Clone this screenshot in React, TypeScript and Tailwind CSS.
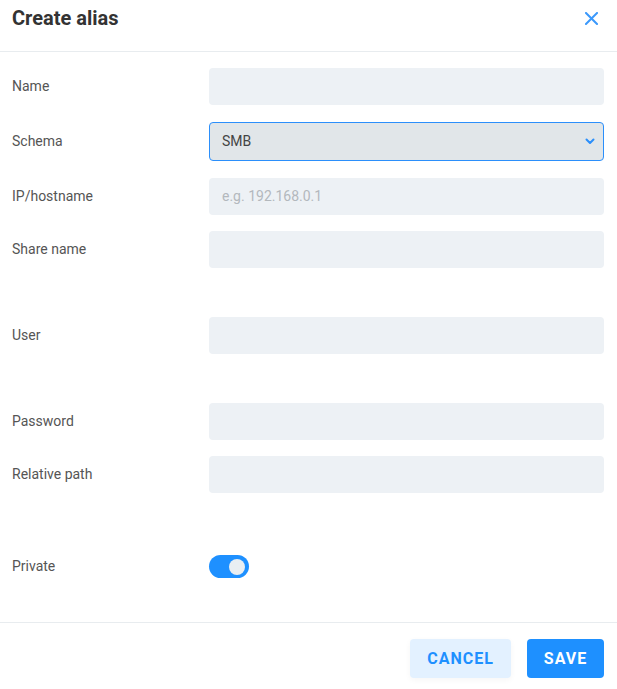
import React from "react";

function Field({ placeholder }: { placeholder?: string }) {
  return (
    <div className="h-[37px] rounded-[4px] bg-[#edf1f5] flex items-center px-[13px] text-[14px] text-[#b3b8bd]">
      {placeholder}
    </div>
  );
}

function Row({ label, mt, children }: { label: string; mt: string; children: React.ReactNode }) {
  return (
    <div className={`grid grid-cols-[197px_1fr] items-center ${mt}`}>
      <div className="text-[14px] text-[#555555]">{label}</div>
      {children}
    </div>
  );
}

export default function App() {
  return (
    <div className="w-[617px] h-[689px] bg-white flex flex-col" style={{ fontFamily: "Roboto, 'Noto Sans', sans-serif" }}>
      <div className="h-[52px] border-b border-[#e8ecef] flex items-start justify-between pl-3 pr-[19px] pt-[4px]">
        <h1 className="text-[20px] leading-[28px] font-bold text-[#333333]">Create alias</h1>
        <svg className="mt-[8px]" width="13" height="13" viewBox="0 0 13 13" fill="none">
          <path d="M1 1L12 12M12 1L1 12" stroke="#3b99fc" strokeWidth="2" strokeLinecap="square" />
        </svg>
      </div>
      <div className="flex flex-col pl-3 pr-[13px]">
        <Row label="Name" mt="mt-[16px]">
          <Field />
        </Row>
        <Row label="Schema" mt="mt-[17px]">
          <div className="h-[39px] rounded-[4px] bg-[#e1e6e9] border border-[#2b8ffb] flex items-center justify-between pl-[12px] pr-[8px] text-[14px] text-[#444444]">
            <span>SMB</span>
            <svg width="10" height="7" viewBox="0 0 10 7" fill="none">
              <path d="M1.5 1.5L5 5L8.5 1.5" stroke="#2b8ffb" strokeWidth="2" strokeLinecap="round" strokeLinejoin="round" />
            </svg>
          </div>
        </Row>
        <Row label="IP/hostname" mt="mt-[17px]">
          <Field placeholder="e.g. 192.168.0.1" />
        </Row>
        <Row label="Share name" mt="mt-[16px]">
          <Field />
        </Row>
        <Row label="User" mt="mt-[49px]">
          <Field />
        </Row>
        <Row label="Password" mt="mt-[49px]">
          <Field />
        </Row>
        <Row label="Relative path" mt="mt-[16px]">
          <Field />
        </Row>
        <Row label="Private" mt="mt-[62px]">
          <div className="w-[40px] h-[23px] rounded-full bg-[#1e90ff] flex items-center justify-end pr-[4px]">
            <div className="w-[16px] h-[16px] rounded-full bg-[#e9eef2]" />
          </div>
        </Row>
      </div>
      <div className="mt-[44px] border-t border-[#e8ecef] flex justify-end gap-4 pt-[16px] pr-[13px]">
        <button className="h-[39px] w-[101px] rounded-[4px] bg-[#e3f1ff] text-[#1e90ff] text-[16px] font-bold tracking-[1px] shadow-[0_2px_6px_rgba(0,0,0,0.04)]">
          CANCEL
        </button>
        <button className="h-[39px] w-[77px] rounded-[4px] bg-[#1e90ff] text-white text-[16px] font-bold tracking-[1px]">
          SAVE
        </button>
      </div>
    </div>
  );
}
